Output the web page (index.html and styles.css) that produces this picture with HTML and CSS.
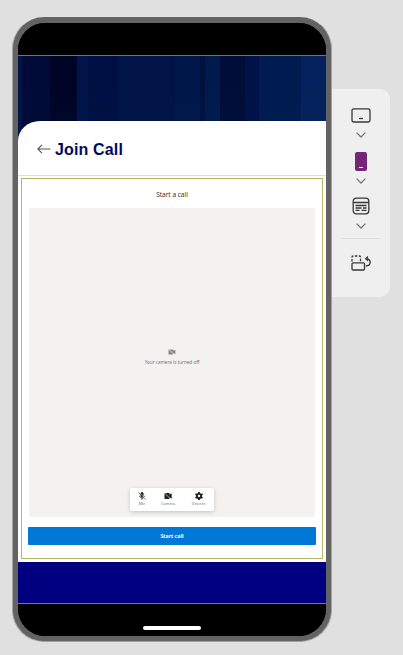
FILE: index.html
```
<!DOCTYPE html>
<html lang="en">
<head>
<meta charset="utf-8">
<title>Join Call</title>
<link rel="stylesheet" href="styles.css">
</head>
<body>
<main class="stage">
  <section class="phone">
    <div class="screen">
      <div class="bezel top"></div>
      <div class="banner"></div>
      <header class="header">
        <svg class="back" width="15" height="10" viewBox="0 0 15 10"><path d="M13.6 5H1M5 .8.8 5 5 9.2"/></svg>
        <h1>Join Call</h1>
      </header>
      <div class="content">
        <div class="call">
          <h2>Start a call</h2>
          <div class="preview">
            <div class="off">
              <svg width="8" height="6" viewBox="0 0 8 6"><path fill="#8a8886" d="M.5.5h4.8v1.3L7.4.7v4.6L5.3 4.2v1.3H.5z"/><path d="M.3 0 6.8 6" stroke="#f3f2f1" stroke-width=".7"/></svg>
              <p>Your camera is turned off</p>
            </div>
            <div class="toolbar">
              <div class="tool mic">
                <svg width="8" height="8" viewBox="0 0 8 8"><path fill="#222" d="M2.5 1.5a1.5 1.5 0 0 1 3 0v2.4a1.5 1.5 0 0 1-3 0z"/><path d="M1.5 3.8c0 3 5 3 5 0M4 6v2M.7.5l6.6 7" fill="none" stroke="#222" stroke-width=".7"/><path d="M1.4.2 8 7.6" stroke="#fff" stroke-width=".5"/></svg>
                <span>Mic</span>
              </div>
              <div class="tool camera">
                <svg width="8" height="8" viewBox="0 0 8 8"><path fill="#222" d="M.5 1.1h5v1.5l2.2-1.3v5.4l-2.2-1.3v1.6h-5z"/><path d="m.5.8 6.2 6.5" stroke="#fff" stroke-width=".6"/></svg>
                <span>Camera</span>
              </div>
              <div class="tool devices">
                <svg width="8" height="8" viewBox="0 0 8 8"><circle cx="4" cy="4" r="2.1" fill="none" stroke="#222" stroke-width="1.9"/><path d="M4 0v1.7M4 6.3V8M.5 2 2 2.9M6 5.1 7.5 6M.5 6 2 5.1M6 2.9 7.5 2" stroke="#222" stroke-width="1.9"/></svg>
                <span>Devices</span>
              </div>
            </div>
          </div>
          <button class="start">Start call</button>
        </div>
      </div>
      <div class="footer"></div>
      <div class="bezel bottom"><i></i></div>
    </div>
  </section>
  <aside class="rail">
    <svg class="landscape" width="20" height="15" viewBox="0 0 20 15"><rect x="1" y=".8" width="18" height="13.2" rx="1.8"/><path d="M8 10.5h4"/></svg>
    <svg class="chevron" width="10" height="6" viewBox="0 0 10 6"><path d="m.6.6 4.4 4.4L9.4.6"/></svg>
    <div class="portrait"></div>
    <svg class="chevron" width="10" height="6" viewBox="0 0 10 6"><path d="m.6.6 4.4 4.4L9.4.6"/></svg>
    <svg class="form" width="18" height="18" viewBox="0 0 18 18"><rect x="1.2" y="1.2" width="15.6" height="15.6" rx="3"/><path d="M1.2 5.5h15.6M3.5 8.5h11M3.5 11h6M11 11h3.5M3.5 13.3h4M9.5 13.3h5"/></svg>
    <svg class="chevron" width="10" height="6" viewBox="0 0 10 6"><path d="m.6.6 4.4 4.4L9.4.6"/></svg>
    <hr>
    <svg class="rotate" width="20" height="16" viewBox="0 0 20 16"><rect x="1" y="7.8" width="12.5" height="7.2" rx="1"/><path stroke-dasharray="2.4 1.5" d="M1 6.5V2q0-1 1-1h6.5q1 0 1 1v5"/><path d="M14.8 11c5.8-.3 5.8-7.3.3-7.3M17 1.5l-2.2 2.2L17 5.9"/></svg>
  </aside>
</main>
</body>
</html>
```

FILE: styles.css
```
* { box-sizing: border-box; }
body { margin: 0; background: #e0e0e0; font-family: "Noto Sans", sans-serif; }
svg { display: block; flex: none; }
h1, h2, p { margin: 0; }
.stage { display: flex; align-items: flex-start; width: 403px; height: 655px; padding: 17px 0 0 12px; overflow: hidden; }
.phone { flex: none; width: 320px; height: 625px; padding: 6px 5px 5px; background: #636363; border: solid #a2a2a2; border-width: 0 1px 1px; border-radius: 32px; }
.screen { display: flex; flex-direction: column; width: 308px; height: 613px; overflow: hidden; border-radius: 27px; background: #000; }
.bezel { flex: none; height: 33px; background: #000; }
.top { border-bottom: 1px solid #68758d; }
.banner {
  flex: none; height: 86px; margin-bottom: -21px;
  background: linear-gradient(#0000 30%, #00245022), linear-gradient(90deg, #001449 0 4px, #000a36 4px 32px, #000426 32px 59px, #001449 59px 70px, #000f43 70px 100px, #001447 100px 157px, #001849 157px 182px, #001140 182px 187px, #001a4d 187px 202px, #000d38 202px 227px, #001248 227px 241px, #001b50 241px 283px, #06225e 283px);
}
.header { flex: none; display: flex; align-items: center; gap: 3px; height: 55px; padding: 1px 0 0 19px; background: #fff; border-bottom: 1px solid #dcdce2; border-top-left-radius: 22px 20px; }
.back { fill: none; stroke: #555; stroke-width: 1.1; }
h1 { padding-top: 2px; font: bold 16px/20px "Liberation Sans", sans-serif; letter-spacing: .15px; color: #000b5c; }
.content { flex: none; height: 386px; padding: 2px 3px 3px; background: #fff; }
.call { height: 381px; padding: 10px 6px 0; border: 1px solid #b7b665; }
h2 { height: 19px; font-size: 6.5px; line-height: 11px; font-weight: 400; color: #333; text-align: center; }
.preview { display: flex; flex-direction: column; align-items: center; justify-content: space-between; width: 286px; height: 309px; margin-left: 1px; padding: 141px 0 6px; background: #f3f2f1; border-radius: 2px; }
.off { display: flex; flex-direction: column; align-items: center; gap: 4px; color: #77777a; font-size: 4.6px; line-height: 7px; }
.toolbar { display: flex; width: 84px; height: 23px; padding: 4px 0 0 1px; background: #fff; border-radius: 2px; box-shadow: 0 1px 4px #0003; }
.tool { display: flex; flex-direction: column; align-items: center; gap: 1px; font-size: 3.8px; line-height: 6px; color: #777; }
.mic { width: 22px; color: #a05568; }
.camera { width: 30px; }
.devices { width: 31px; }
.start { display: block; width: 288px; height: 18px; margin: 10px 0 0; padding: 0; border: 0; border-radius: 1px; background: #0078d7; color: #fff; font: bold 5.2px/18px "Noto Sans", sans-serif; }
.footer { flex: none; height: 41px; background: #000080; }
.bottom { display: flex; justify-content: center; padding-top: 22px; border-top: 1px solid #778; }
.bottom i { width: 58px; height: 4px; border-radius: 2px; background: #fff; }
.rail { display: flex; flex-direction: column; align-items: center; width: 58px; height: 208px; margin-top: 72px; padding-top: 19px; background: #efefef; border-radius: 0 10px 10px 0; }
.rail svg { fill: none; stroke: #383838; stroke-width: 1.3; }
.rail .chevron { margin-top: 9px; stroke: #777; }
.portrait { display: flex; justify-content: center; width: 12px; height: 19px; margin-top: 14px; border-radius: 2px; background: #742774; }
.portrait::after { content: ""; width: 4px; height: 1px; margin-top: 15px; background: #fff; }
.rail .portrait + .chevron { margin-top: 7px; }
.form { margin-top: 13px; }
.rail .form + .chevron { margin-top: 8px; }
hr { width: 38px; height: 1px; margin: 9px 0 0; border: 0; background: #dedede; }
.rotate { margin-top: 16px; }
```
